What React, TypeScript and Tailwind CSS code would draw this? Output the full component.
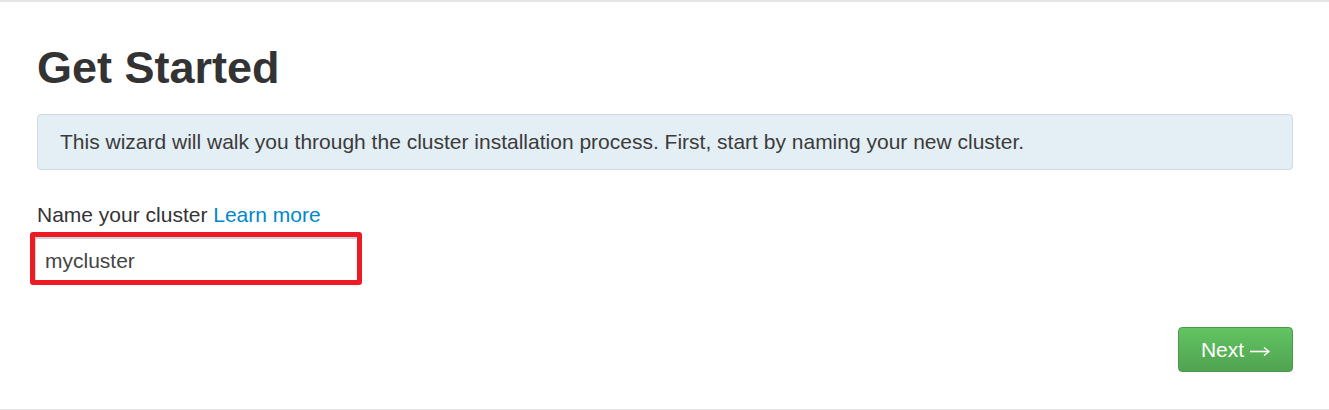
export default function App() {
  return (
    <div
      className="w-full h-[410px] border-t-2 border-b border-[#e5e5e5] bg-white pl-[37px] pr-[36px] pt-[42px] text-[#333]"
      style={{ fontFamily: '"Liberation Sans", Arial, sans-serif' }}
    >
      <h1 className="text-[45px] leading-[48px] font-bold">Get Started</h1>

      <div className="mt-[22px] h-[56px] flex items-center rounded-[4px] border border-[#cfd9de] bg-[#e4eff5] px-[22px] text-[21px] text-[#3b3b3b]">
        This wizard will walk you through the cluster installation process. First, start by naming your new cluster.
      </div>

      <div className="mt-[30px] text-[21px] leading-[30px]">
        Name your cluster{" "}
        <a href="#" className="text-[#0088cc]">
          Learn more
        </a>
      </div>

      <div className="mt-[2px] -ml-[7px] w-[332px] h-[53px] rounded-[3px] border-[5px] border-[#ed1c24]">
        <div className="h-full border-t-2 border-l border-[#d4d4d4] bg-white pl-[9px] pt-[3px] flex items-center text-[21px] text-[#444]">
          mycluster
        </div>
      </div>

      <div className="mt-[42px] flex justify-end">
        <button className="w-[115px] h-[45px] rounded-[4px] border border-[#4a9a4a] bg-gradient-to-b from-[#62c462] to-[#51a351] text-white text-[21px] flex items-center justify-center gap-[6px]">
          <span>Next</span>
          <svg width="20" height="12" viewBox="0 0 20 12" className="mt-[2px]">
            <path d="M0 6.5H18.5" stroke="white" strokeWidth="1.6" fill="none" />
            <path d="M14 2.5L19 6.5L14 10.5" stroke="white" strokeWidth="1.4" fill="none" />
          </svg>
        </button>
      </div>
    </div>
  );
}
